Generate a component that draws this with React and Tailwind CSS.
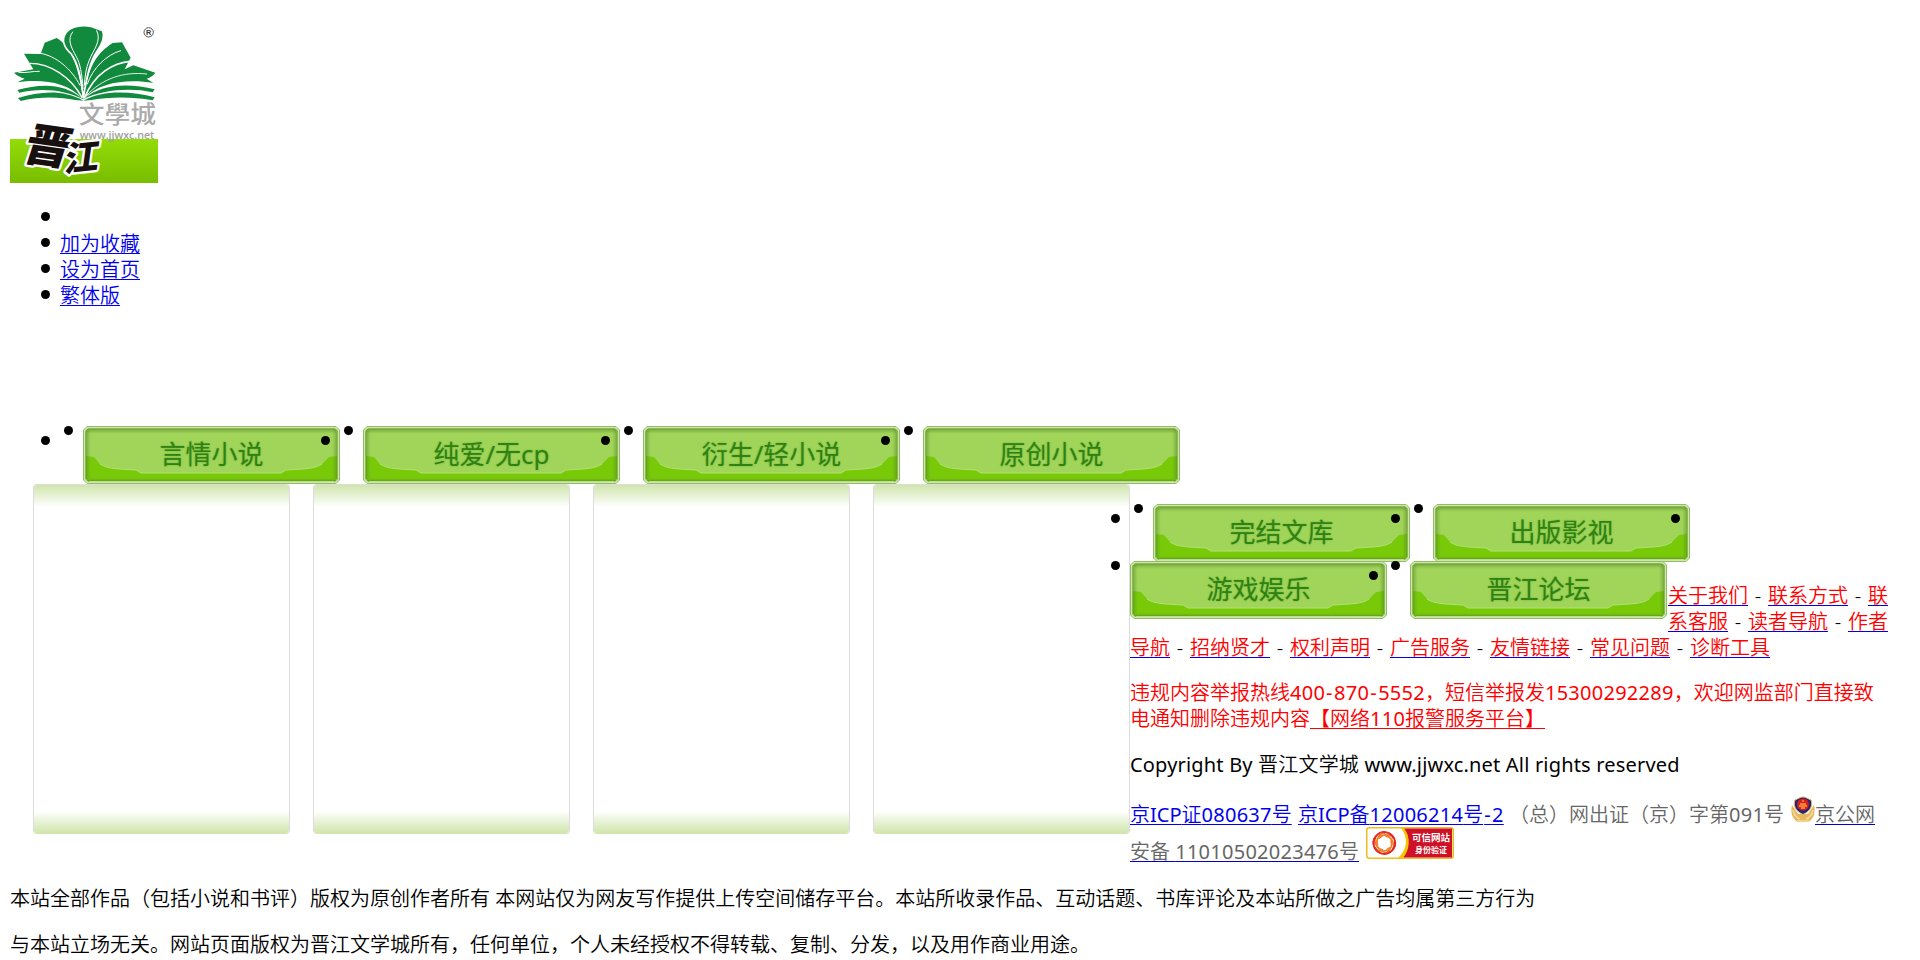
import React from "react";

const Dot = ({ className }) => (
  <span className={`absolute size-[9px] rounded-full bg-black ${className}`} />
);

const Logo = () => (
  <svg className="block h-[173px] w-[148px]" viewBox="30 0 444 519">
    <defs>
      <linearGradient id="grass" x1="0" y1="0" x2="0" y2="1">
        <stop offset="0" stopColor="#93dc08" />
        <stop offset="1" stopColor="#78bd00" />
      </linearGradient>
    </defs>
    <rect x="30" y="387" width="444" height="132" fill="url(#grass)" />
    <g fill="#128a3e">
      <path d="M250 268C190 216 120 222 52 240L58 248C126 232 196 240 250 268Z" />
      <path d="M250 272C190 238 120 244 54 264L62 273C128 258 180 262 226 270Z" />
      <path d="M250 268C310 216 396 222 464 238L458 247C390 232 304 240 250 268Z" />
      <path d="M250 272C310 238 396 244 464 262L458 271C390 258 320 262 274 270Z" />
      <path d="M249 268C200 212 120 208 52 217L74 206C62 202 50 196 42 188L100 178L72 131L122 132L134 98L170 84C208 106 236 160 249 268Z" />
      <path d="M251 268C300 212 390 208 460 219L440 206C452 202 460 196 466 188L400 166L374 178L392 143L366 97L338 99C288 130 262 176 251 268Z" />
    </g>
    <path d="M250 264C243 198 234 162 214 132C190 110 184 88 198 68C212 49 246 44 272 49L308 62C316 82 305 104 291 124C270 154 260 200 250 264Z" fill="#128a3e" stroke="#fff" strokeWidth="5" />
    <g fill="none" stroke="#fff" strokeLinecap="round">
      <path d="M90 160C150 160 212 200 246 262" strokeWidth="4" />
      <path d="M56 187C80 190 96 183 118 184" strokeWidth="3" />
      <path d="M122 130C168 138 214 176 240 226" strokeWidth="3" />
      <path d="M392 154C340 158 284 190 254 262" strokeWidth="5" />
      <path d="M362 122C320 134 278 174 262 222" strokeWidth="3" />
      <path d="M440 192C370 184 306 206 260 256" strokeWidth="2.5" />
      <path d="M218 66C200 90 214 112 230 142C240 160 246 190 249 236" strokeWidth="3" />
      <path d="M290 62C306 92 280 120 268 150C257 176 255 200 253 226" strokeWidth="3" />
    </g>
    <circle cx="446" cy="67" r="14" fill="none" stroke="#333" strokeWidth="2.5" />
    <text x="446" y="75" textAnchor="middle" fill="#333" fontSize="22" fontWeight="700" fontFamily="Liberation Sans, sans-serif">R</text>
    <g fill="#18100e" stroke="#fff" strokeWidth="14" strokeLinejoin="round" paintOrder="stroke" fontWeight="900" fontFamily="Noto Sans CJK SC, sans-serif">
      <text transform="translate(62 448) rotate(8) skewX(-10)" fontSize="138">晋</text>
      <text transform="translate(190 486) rotate(-6) skewX(-14)" fontSize="104">江</text>
    </g>
    <text x="236" y="340" fill="#aaa" fontSize="70" textLength="232" lengthAdjust="spacingAndGlyphs" fontFamily="Noto Sans CJK TC, sans-serif" fontWeight="500">文學城</text>
    <text x="239" y="386" fill="#a0a0a0" fontSize="34" textLength="224" lengthAdjust="spacingAndGlyphs" fontFamily="Open Sans, sans-serif" fontWeight="600">www.jjwxc.net</text>
  </svg>
);

const NavButton = ({ children }) => (
  <a className="grid h-[58px] w-[257px] shrink-0">
    <svg className="col-start-1 row-start-1" width="257" height="58" viewBox="0 0 257 58">
      <defs>
        <linearGradient id="edgeTop" x1="0" y1="0" x2="0" y2="1">
          <stop offset="0" stopColor="#4f7d20" stopOpacity=".55" />
          <stop offset="1" stopColor="#6a9c35" stopOpacity="0" />
        </linearGradient>
        <linearGradient id="edgeSide">
          <stop offset="0" stopColor="#4f7d20" stopOpacity=".5" />
          <stop offset="1" stopColor="#6a9c35" stopOpacity="0" />
        </linearGradient>
      </defs>
      <path d="M4 .5H253L256.500 4V54L253 57.500H4L.5 54V4Z" fill="#cfe6ae" stroke="#93bd62" />
      <path d="M5 2.500H252L254.500 5V53L252 55.500H5L2.500 53V5Z" fill="#a1d55a" stroke="#8ab857" />
      <path d="M3 30L11 31L17 38C24 43 36 43 53 44L58 47H198L203 44C221 43 232 43 239 38L246 31L254 30V53L252 55H5L3 53Z" fill="#78ca08" />
      <path d="M17 38C24 43 36 43 53 44L58 47H198L203 44C221 43 232 43 239 38" fill="none" stroke="#b2e074" strokeWidth="1" />
      <rect x="4" y="3" width="249" height="5" fill="url(#edgeTop)" />
      <rect x="3" y="4" width="5" height="49" fill="url(#edgeSide)" />
      <rect x="3" y="4" width="5" height="49" fill="url(#edgeSide)" transform="matrix(-1 0 0 1 257 0)" />
      <rect x="4" y="3" width="249" height="3" fill="url(#edgeTop)" transform="matrix(1 0 0 -1 0 58)" />
      <path d="M6 55.500H251" stroke="#bcdc95" />
    </svg>
    <span className="col-start-1 row-start-1 mt-[9px] text-center text-[26px] font-normal leading-[38px] text-[#2f8212] [text-shadow:0_0_2px_#68ae35]">
      {children}
    </span>
  </a>
);

const Panel = () => (
  <div className="flex h-[350px] w-[257px] shrink-0 flex-col justify-between overflow-hidden rounded-[4px] border border-[#dcdcdc] border-b-[#d4e6b4]">
    <div className="h-[22px] bg-linear-to-b from-[#d0e5ab] to-white" />
    <div className="h-[22px] bg-linear-to-t from-[#d0e5ab] to-white" />
  </div>
);

const Link = ({ children, className = "text-[#f00] decoration-[#00e]" }) => (
  <a className={`underline decoration-1 underline-offset-[2px] [text-decoration-skip-ink:none] ${className}`}>{children}</a>
);
const BLUE = "text-[#00e] decoration-[#00e]";
const GREY = "text-[#666] decoration-[#00c]";

const Sep = () => <span className="inline-block w-5 text-center text-black">-</span>;
const Num = ({ children }) => <span className="font-normal tracking-[0.26px]">{children}</span>;
const Hy = () => <span className="pl-px font-normal tracking-[1.5px]">-</span>;

const Badge = () => (
  <svg className="ml-[6px] block h-[27px] w-6" viewBox="0 0 24 27">
    <path d="M1 9C-1 17 2 24 7 26H17C22 24 25 17 23 9L17 18H7Z" fill="#e6b75c" />
    <path d="M2 14C3 19 6 22 9 23M22 14C21 19 18 22 15 23M6 25H18" stroke="#f6d999" strokeWidth="1.600" fill="none" />
    <path d="M12 1C15 1 17 3 20 4C22 9 20 15 12 18.500C4 15 2 9 4 4C7 3 9 1 12 1Z" fill="#232576" stroke="#e6b86b" />
    <circle cx="12" cy="8.500" r="6" fill="#d71f1d" />
    <path d="M8 10H16M9 8H15M12 4V6M10 12H14" stroke="#f6a23b" strokeWidth="1.300" />
  </svg>
);

const Trusted = () => (
  <svg className="-mt-px ml-[6px] block h-8 w-[88px]" viewBox="0 0 88 32">
    <rect x=".75" y=".75" width="86.500" height="30.500" rx="2.500" fill="#fff" stroke="#efbd1c" strokeWidth="1.500" />
    <path d="M37 1.500H86V30.500H36C43 22 44 10 37 1.500Z" fill="#ce1126" />
    <path d="M35 1H38C45 10 44 23 37 31H32C42 22 42 10 35 1Z" fill="#fac400" />
    <g fill="none" strokeWidth="2" strokeLinecap="round" transform="translate(18.300 16)">
      {[0, 60, 120, 180, 240, 300].map((a) => (
        <g key={a} transform={`rotate(${a})`}>
          <path d="M-6 -9C0 -13 7 -10 9 -5" stroke="#e32b26" />
          <path d="M-5 -5C-2 -9 4 -8 7 -7" stroke="#f47b22" strokeWidth="1.800" />
        </g>
      ))}
    </g>
    <g fill="#fff" fontWeight="700" fontFamily="Noto Sans CJK SC, sans-serif">
      <text x="46" y="13.500" fontSize="9.500" textLength="38">可信网站</text>
      <text x="49" y="26" fontSize="8" textLength="32">身份验证</text>
    </g>
  </svg>
);

export default function App() {
  return (
    <div className="flex h-[960px] w-[1920px] flex-col overflow-hidden bg-white text-[20px] font-[350] leading-[26px] text-black [font-family:'Noto_Sans','Noto_Sans_CJK_SC',sans-serif]">
      <header className="pl-[10px] pt-[10px]">
        <Logo />
      </header>

      <ul className="mt-[22px] h-[104px] pl-[60px]">
        {["", "加为收藏", "设为首页", "繁体版"].map((t) => (
          <li key={t} className="relative h-[26px]">
            <Dot className="-left-[19px] top-[7px]" />
            {t && <Link className={BLUE}>{t}</Link>}
          </li>
        ))}
      </ul>

      <nav className="mt-[117px] flex h-[58px] gap-[23px] pl-[83px]">
        {["言情小说", "纯爱/无cp", "衍生/轻小说", "原创小说"].map((t) => (
          <div key={t} className="relative">
            <NavButton>{t}</NavButton>
            <Dot className="-left-[42px] top-[10px]" />
            <Dot className="-left-[19px] top-0" />
          </div>
        ))}
      </nav>

      <main className="flex h-[382px] pl-[33px]">
        <div className="flex gap-[23px]">
          <Panel />
          <Panel />
          <Panel />
          <Panel />
        </div>

        <div className="flex flex-col whitespace-nowrap pt-5">
          <div className="flex h-[57px] gap-[23px] pl-[23px]">
            <div className="relative">
              <NavButton>完结文库</NavButton>
              <Dot className="-left-[42px] top-[10px]" />
              <Dot className="-left-[19px] top-0" />
            </div>
            <div className="relative">
              <NavButton>出版影视</NavButton>
              <Dot className="-left-[42px] top-[10px]" />
              <Dot className="-left-[19px] top-0" />
              <Dot className="left-[238px] top-[10px]" />
            </div>
          </div>
          <div className="flex h-[74px]">
            <div className="relative">
              <NavButton>游戏娱乐</NavButton>
              <Dot className="-left-[19px] top-0" />
              <Dot className="left-[239px] top-[10px]" />
            </div>
            <div className="relative ml-[23px]">
              <NavButton>晋江论坛</NavButton>
              <Dot className="-left-[19px] top-0" />
            </div>
            <div className="ml-px pt-[22px]">
              <div><Link>关于我们</Link><Sep /><Link>联系方式</Link><Sep /><Link>联</Link></div>
              <div><Link>系客服</Link><Sep /><Link>读者导航</Link><Sep /><Link>作者</Link></div>
            </div>
          </div>
          <div>
            <Link>导航</Link><Sep /><Link>招纳贤才</Link><Sep /><Link>权利声明</Link><Sep /><Link>广告服务</Link><Sep /><Link>友情链接</Link><Sep /><Link>常见问题</Link><Sep /><Link>诊断工具</Link>
          </div>

          <p className="mt-[19px] text-[#f00]">
            违规内容举报热线<Num>400</Num><Hy /><Num>870</Num><Hy /><Num>5552</Num>，短信举报发<Num>15300292289</Num>，欢迎网监部门直接致
            <br />
            电通知删除违规内容<Link className="text-[#f00] decoration-[#f00]">【网络<Num>110</Num>报警服务平台】</Link>
          </p>

          <p className="mt-5 tracking-[0.18px]">
            <span className="font-normal">Copyright By </span>晋江文学城<span className="font-normal"> www.jjwxc.net All rights reserved</span>
          </p>

          <div className="mt-[18px] flex h-8 items-start">
            <span className="mt-[6px] w-[162px]"><Link className={BLUE}>京<span className="font-normal">ICP</span>证<Num>080637</Num>号</Link></span>
            <span className="ml-[6px] mt-[6px] w-[205px]"><Link className={BLUE}>京<span className="font-normal">ICP</span>备<Num>12006214</Num>号<Hy /><Num>2</Num></Link></span>
            <span className="ml-[6px] mt-[6px] w-[276px] text-[#666]">（总）网出证（京）字第<Num>091</Num>号</span>
            <Badge />
            <span className="mt-[6px]"><Link className={GREY}>京公网</Link></span>
          </div>
          <div className="flex items-start">
            <span className="mt-[11px] w-[230px]"><Link className={GREY}>安备 <Num>11010502023476</Num>号</Link></span>
            <Trusted />
          </div>
        </div>
      </main>

      <footer className="flex flex-col gap-5 whitespace-nowrap pl-[10px] pt-5">
        <p>本站全部作品（包括小说和书评）版权为原创作者所有 本网站仅为网友写作提供上传空间储存平台。本站所收录作品、互动话题、书库评论及本站所做之广告均属第三方行为</p>
        <p>与本站立场无关。网站页面版权为晋江文学城所有，任何单位，个人未经授权不得转载、复制、分发，以及用作商业用途。</p>
      </footer>
    </div>
  );
}
